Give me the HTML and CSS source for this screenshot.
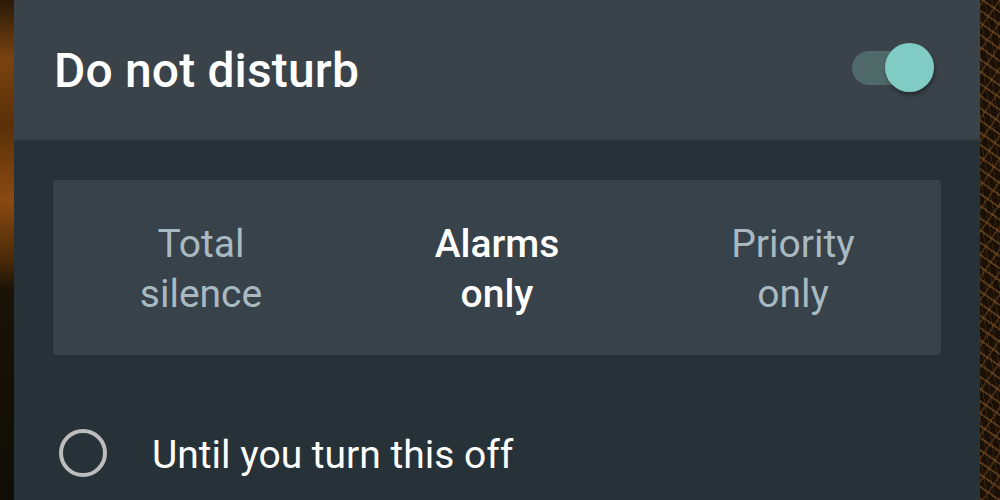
FILE: index.html
```html
<!DOCTYPE html>
<html>
<head>
<meta charset="utf-8">
<link rel="stylesheet" href="styles.css">
</head>
<body>
<div class="screen">
  <div class="wall wall-left"></div>
  <div class="panel">
    <header class="header">
      <h1 class="title">Do not disturb</h1>
      <div class="switch"><div class="track"></div><div class="thumb"></div></div>
    </header>
    <div class="content">
      <div class="segments">
        <div class="seg">Total<br>silence</div>
        <div class="seg active">Alarms<br>only</div>
        <div class="seg">Priority<br>only</div>
      </div>
      <div class="option">
        <span class="radio"></span>
        <span class="label">Until you turn this off</span>
      </div>
    </div>
  </div>
  <div class="wall wall-right"></div>
</div>
</body>
</html>
```
FILE: styles.css
```css
html, body {
  margin: 0;
  padding: 0;
  width: 1000px;
  height: 500px;
  overflow: hidden;
  font-family: Roboto, "Liberation Sans", sans-serif;
}
.screen {
  display: flex;
  width: 1000px;
  height: 500px;
}
.wall-left {
  width: 14px;
  background: linear-gradient(180deg, #2a1a08 0%, #7a4310 12%, #5a3008 25%, #8a4a12 40%, #4a2a08 52%, #1a1306 58%, #0f0d05 100%);
}
.wall-right {
  width: 20px;
  background:
    repeating-linear-gradient(35deg, rgba(140,90,40,0.5) 0 2px, transparent 2px 10px),
    repeating-linear-gradient(-55deg, rgba(110,70,30,0.45) 0 2px, transparent 2px 13px),
    repeating-linear-gradient(80deg, rgba(90,60,25,0.4) 0 1px, transparent 1px 7px),
    #1a1006;
}
.panel {
  flex: 1;
  display: flex;
  flex-direction: column;
  background: #263238;
}
.header {
  height: 139px;
  background: #3a424a;
  border-bottom: 2px solid #30383e;
  display: flex;
  align-items: center;
  justify-content: space-between;
  padding: 0 46px 0 40px;
}
.title {
  margin: 0;
  color: #ffffff;
  font-size: 48px;
  font-weight: 500;
  letter-spacing: 0.15px;
  position: relative;
  top: 1px;
}
.switch {
  position: relative;
  width: 82px;
  height: 50px;
  top: -2px;
}
.track {
  position: absolute;
  left: 0;
  top: 8px;
  width: 70px;
  height: 34px;
  border-radius: 17px;
  background: #4f6a69;
}
.thumb {
  position: absolute;
  right: 0;
  top: 0;
  width: 49px;
  height: 49px;
  border-radius: 50%;
  background: #80cbc4;
  box-shadow: 1px 3px 4px rgba(0,0,0,0.35);
}
.content {
  padding: 39px 39px 0 39px;
}
.segments {
  display: grid;
  grid-template-columns: 1fr 1fr 1fr;
  height: 175px;
  background: #37424a;
  border-radius: 4px;
}
.seg {
  display: flex;
  align-items: center;
  justify-content: center;
  text-align: center;
  color: #a9b9c1;
  font-size: 39px;
  line-height: 50px;
  padding-top: 3px;
}
.seg.active {
  color: #ffffff;
  font-weight: 500;
}
.option {
  display: flex;
  align-items: center;
  margin-top: 73px;
  height: 50px;
}
.radio {
  width: 48px;
  height: 48px;
  box-sizing: border-box;
  border: 4.5px solid #bdbdbd;
  border-radius: 50%;
  margin-left: 6px;
}
.label {
  margin-left: 45px;
  padding-top: 4px;
  color: #ffffff;
  font-size: 39px;
}
```
